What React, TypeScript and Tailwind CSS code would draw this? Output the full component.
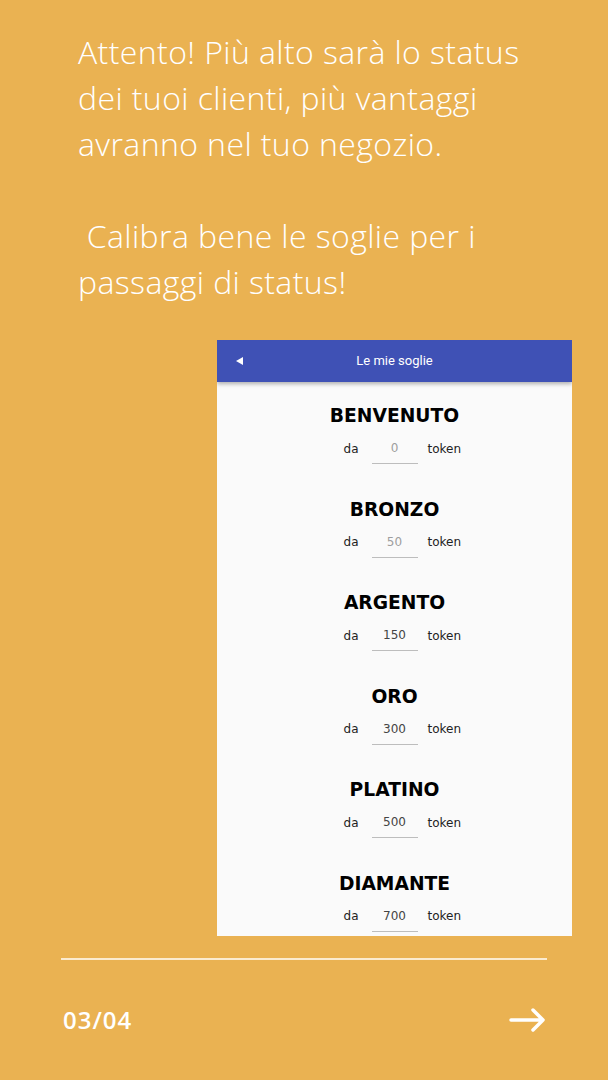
import React from "react";

const tiers = [
  { name: "BENVENUTO", value: "0", placeholder: true },
  { name: "BRONZO", value: "50", placeholder: true },
  { name: "ARGENTO", value: "150", placeholder: false },
  { name: "ORO", value: "300", placeholder: false },
  { name: "PLATINO", value: "500", placeholder: false },
  { name: "DIAMANTE", value: "700", placeholder: false },
];

export default function App() {
  return (
    <div className="w-[608px] h-[1080px] bg-[#EAB252] overflow-hidden flex flex-col">
      <div
        className="shrink-0 pl-[78px] pt-[29px] text-white text-[32px] leading-[46px] font-[350] tracking-[0.4px]"
        style={{ fontFamily: "'Open Sans', sans-serif" }}
      >
        Attento! Più alto sarà lo status
        <br />
        dei tuoi clienti, più vantaggi
        <br />
        avranno nel tuo negozio.
        <br />
        <br />
        &nbsp;Calibra bene le soglie per i
        <br />
        passaggi di status!
      </div>

      <div className="shrink-0 ml-[217px] mt-[35px] w-[355px] h-[596px] bg-[#FAFAFA] overflow-hidden flex flex-col">
        <div className="shrink-0 h-[42px] bg-[#3F51B5] flex items-center relative shadow-[0_2px_4px_rgba(0,0,0,0.3)] z-10">
          <div className="absolute left-[19px] top-[17px] w-0 h-0 border-y-[4px] border-y-transparent border-r-[7px] border-r-white" />
          <div
            className="flex-1 text-center text-white text-[13px]"
            style={{ fontFamily: "Roboto, 'Noto Sans', sans-serif" }}
          >
            Le mie soglie
          </div>
        </div>
        <div className="flex flex-col items-stretch pt-[22px]">
          {tiers.map((t) => (
            <div key={t.name} className="shrink-0 flex flex-col items-center pb-[33.6px]">
              <div
                className="text-[18.7px] leading-[24px] font-bold text-black"
                style={{ fontFamily: "'DejaVu Sans', Verdana, sans-serif" }}
              >
                {t.name}
              </div>
              <div
                className="mt-[5px] w-full grid grid-cols-[1fr_46px_1fr] items-center text-[12px] text-[#222]"
                style={{ fontFamily: "'DejaVu Sans', Verdana, sans-serif" }}
              >
                <span className="text-right pr-[13px]">da</span>
                <div
                  className={
                    "h-[31px] border-b border-[#BDBDBD] flex items-center justify-center " +
                    (t.placeholder ? "text-[#9E9E9E]" : "text-[#444]")
                  }
                >
                  {t.value}
                </div>
                <span className="pl-[10px]">token</span>
              </div>
            </div>
          ))}
        </div>
      </div>

      <div className="shrink-0 mx-[61px] mt-[22px] h-[2px] bg-[#FBEBD0]" />

      <div className="shrink-0 mt-[42px] mx-[63px] flex items-center justify-between">
        <div
          className="text-white text-[24px] font-semibold tracking-[1px]"
          style={{ fontFamily: "'Open Sans', sans-serif" }}
        >
          03/04
        </div>
        <svg width="38" height="28" viewBox="0 0 38 28" fill="none" className="mr-[-2px]">
          <path
            d="M2 14 H34 M24 4 L34 14 L24 24"
            stroke="white"
            strokeWidth="3.5"
            strokeLinecap="round"
            strokeLinejoin="round"
          />
        </svg>
      </div>
    </div>
  );
}
